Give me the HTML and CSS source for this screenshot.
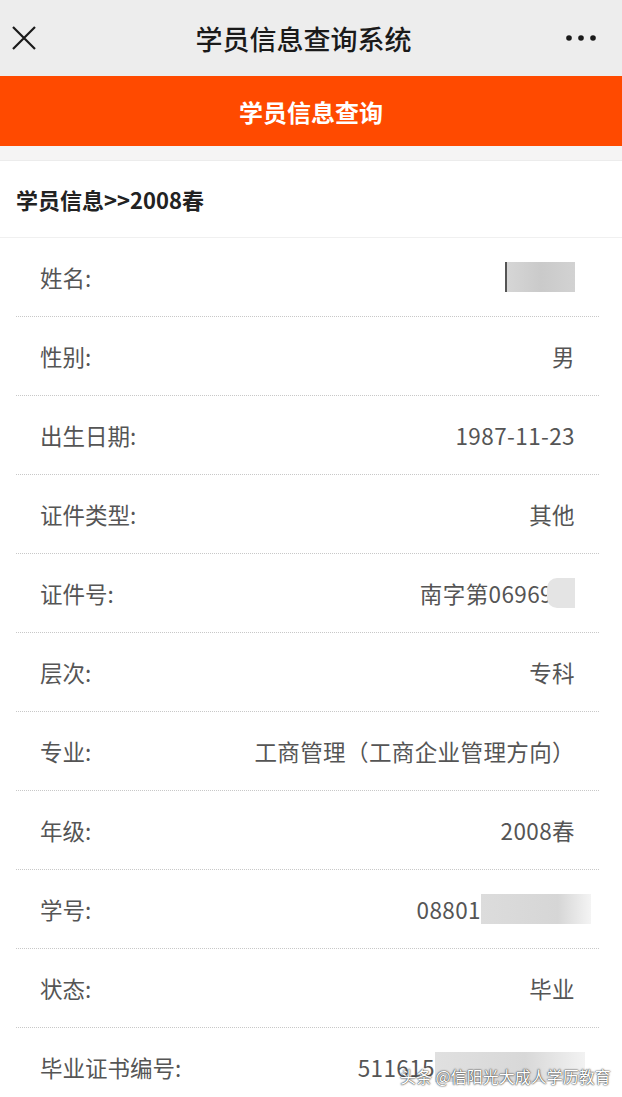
FILE: index.html
```html
<!DOCTYPE html>
<html lang="zh-CN">
  <head>
    <meta charset="UTF-8" />
    <meta name="viewport" content="width=device-width, initial-scale=1.0" />
    <title>学员信息查询系统</title>
    <link rel="stylesheet" href="styles.css">
  </head>
  <body>
    <header class="navbar">
      <span class="nav-close">
        <svg width="26" height="26" viewBox="0 0 26 26">
          <path d="M2 2 L24 24 M24 2 L2 24" stroke="#1a1a1a" stroke-width="2.2" fill="none" />
        </svg>
      </span>
      <h1 class="nav-title">学员信息查询系统</h1>
      <span class="nav-more">
        <svg width="30" height="8" viewBox="0 0 30 8">
          <circle cx="3" cy="4" r="2.8" fill="#1a1a1a" />
          <circle cx="15" cy="4" r="2.8" fill="#1a1a1a" />
          <circle cx="27" cy="4" r="2.8" fill="#1a1a1a" />
        </svg>
      </span>
    </header>

    <div class="banner">学员信息查询</div>
    <div class="spacer"></div>

    <section class="info">
      <h2 class="info-title">学员信息&gt;&gt;2008春</h2>
      <ul class="info-list">
        <li class="row">
          <span class="label">姓名:</span>
          <span class="value"><span class="mask mask-name"></span></span>
        </li>
        <li class="row">
          <span class="label">性别:</span>
          <span class="value">男</span>
        </li>
        <li class="row">
          <span class="label">出生日期:</span>
          <span class="value">1987-11-23</span>
        </li>
        <li class="row">
          <span class="label">证件类型:</span>
          <span class="value">其他</span>
        </li>
        <li class="row">
          <span class="label">证件号:</span>
          <span class="value">南字第06969<span class="mask mask-id"></span></span>
        </li>
        <li class="row">
          <span class="label">层次:</span>
          <span class="value">专科</span>
        </li>
        <li class="row">
          <span class="label">专业:</span>
          <span class="value">工商管理（工商企业管理方向）</span>
        </li>
        <li class="row">
          <span class="label">年级:</span>
          <span class="value">2008春</span>
        </li>
        <li class="row">
          <span class="label">学号:</span>
          <span class="value">08801<span class="mask mask-no"></span></span>
        </li>
        <li class="row">
          <span class="label">状态:</span>
          <span class="value">毕业</span>
        </li>
        <li class="row">
          <span class="label">毕业证书编号:</span>
          <span class="value">511615<span class="mask mask-cert"></span></span>
        </li>
      </ul>
    </section>

    <!-- watermark -->
    <div class="watermark">头条 @信阳光大成人学历教育</div>
  </body>
</html>
```

FILE: styles.css
```css
body {
    margin: 0;
    background: #fff;
    font-family: "Noto Sans CJK SC", "Noto Sans", sans-serif;
    width: 622px;
    height: 1097px;
    overflow: hidden;
    position: relative;
}
.navbar {
    height: 76px;
    background: #ededed;
    display: flex;
    align-items: center;
    justify-content: space-between;
    padding: 0 26px 0 11px;
}
.nav-close, .nav-more {
    display: flex;
    align-items: center;
    width: 32px;
}
.nav-more {
    justify-content: flex-end;
}
.nav-title {
    margin: 0;
    font-size: 27px;
    font-weight: 500;
    color: #1a1a1a;
}
.banner {
    height: 70px;
    background: #ff4a00;
    color: #fff;
    font-size: 24px;
    font-weight: bold;
    display: flex;
    align-items: center;
    justify-content: center;
}
.spacer {
    height: 14px;
    background: #f5f4f4;
    border-bottom: 1px solid #ececec;
}
.info-title {
    margin: 0;
    height: 76px;
    line-height: 76px;
    padding-left: 16px;
    font-size: 22px;
    font-weight: bold;
    color: #222;
    border-bottom: 1px solid #f0f0f0;
}
.info-list {
    list-style: none;
    margin: 0;
    padding: 0 23px 0 16px;
}
.row {
    height: 78px;
    display: flex;
    align-items: center;
    justify-content: space-between;
    padding: 0 24px 0 24px;
    border-bottom: 1px dotted #c8c8c8;
    font-size: 22.5px;
    color: #555;
}
.value {
    display: flex;
    align-items: center;
    letter-spacing: 0.4px;
}
.mask {
    display: inline-block;
    height: 30px;
    background: linear-gradient(90deg, #d6d6d6, #cacaca 50%, #d2d2d2);
}
.mask-name {
    width: 68px;
    border-left: 2px solid #555;
}
.mask-id {
    width: 28px;
    margin-left: -6px;
    border-radius: 10px 0 0 10px;
    background: #e4e4e4;
}
.mask-no {
    width: 110px;
    margin-right: -16px;
    background: linear-gradient(90deg, #dcdcdc, #d6d6d6 70%, #f4f4f4);
}
.mask-cert {
    width: 150px;
    margin-right: -10px;
    background: linear-gradient(90deg, #e0e0e0, #d8d8d8 60%, #f2f2f2);
}
.watermark {
    position: absolute;
    left: 400px;
    top: 1064px;
    font-size: 16px;
    color: #fff;
    text-shadow: 0 0 2px #333, 0 0 1px #222;
}
```
